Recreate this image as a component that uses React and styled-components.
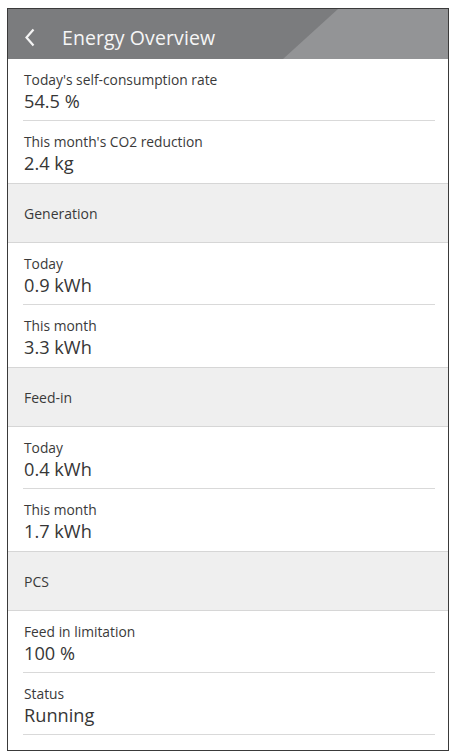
import React from 'react'
import styled, { createGlobalStyle } from 'styled-components'

const GlobalStyle = createGlobalStyle`
  html, body {
    margin: 0;
    padding: 0;
    background: #ffffff;
  }
  body {
    font-family: "Open Sans", "Noto Sans", sans-serif;
  }
`

const groups = [
  {
    title: null,
    items: [
      { label: "Today's self-consumption rate", value: '54.5 %' },
      { label: "This month's CO2 reduction", value: '2.4 kg' },
    ],
  },
  {
    title: 'Generation',
    items: [
      { label: 'Today', value: '0.9 kWh' },
      { label: 'This month', value: '3.3 kWh' },
    ],
  },
  {
    title: 'Feed-in',
    items: [
      { label: 'Today', value: '0.4 kWh' },
      { label: 'This month', value: '1.7 kWh' },
    ],
  },
  {
    title: 'PCS',
    items: [
      { label: 'Feed in limitation', value: '100 %' },
      { label: 'Status', value: 'Running' },
    ],
  },
]

function App() {
  return (
    <>
      <GlobalStyle />
      <Frame>
        <Header>
          <BackButton aria-label="back">
            <svg width="12" height="19" viewBox="0 0 12 19">
              <path d="M9.5 1.5 L2.5 9.5 L9.5 17.5" fill="none" stroke="#f4f4f4" strokeWidth="2.2" />
            </svg>
          </BackButton>
          <Title>Energy Overview</Title>
        </Header>
        {groups.map((group, gi) => (
          <div key={gi}>
            {group.title && <SectionHeader>{group.title}</SectionHeader>}
            {group.items.map((item, ii) => (
              <Item
                key={ii}
                $divider={ii < group.items.length - 1 || gi === groups.length - 1}
              >
                <Label>{item.label}</Label>
                <Value>{item.value}</Value>
              </Item>
            ))}
          </div>
        ))}
      </Frame>
    </>
  )
}

export default App

const Frame = styled.div`
  box-sizing: border-box;
  width: 442px;
  height: 743px;
  margin: 8px 0 0 7px;
  border: 1.5px solid #3a3a3a;
  background: #ffffff;
  overflow: hidden;
`

const Header = styled.div`
  position: relative;
  height: 50px;
  display: flex;
  align-items: center;
  padding-top: 7px;
  box-sizing: border-box;
  background: #7b7c7e;

  &::before {
    content: '';
    position: absolute;
    inset: 0;
    background: #939496;
    clip-path: polygon(330px 0, 100% 0, 100% 100%, 275px 100%);
  }
`

const BackButton = styled.div`
  position: relative;
  width: 54px;
  padding-left: 16px;
  box-sizing: border-box;
  display: flex;
  align-items: center;
`

const Title = styled.div`
  position: relative;
  color: #f6f6f6;
  font-size: 19.5px;
  letter-spacing: 0.1px;
`

const SectionHeader = styled.div`
  box-sizing: border-box;
  height: 60px;
  display: flex;
  align-items: center;
  padding-left: 16px;
  background: #efefef;
  border-top: 1px solid #d6d6d6;
  border-bottom: 1px solid #d6d6d6;
  color: #3a3a3a;
  font-size: 14px;
`

const Item = styled.div`
  box-sizing: border-box;
  height: 62px;
  margin: 0 13px 0 15px;
  padding: 11px 0 0 1px;
  border-bottom: 1px solid ${props => (props.$divider ? '#d9d9d9' : 'transparent')};
`

const Label = styled.div`
  font-size: 13.8px;
  line-height: 19px;
  color: #3a3a3a;
`

const Value = styled.div`
  font-size: 18.2px;
  line-height: 24px;
  color: #363636;
`
